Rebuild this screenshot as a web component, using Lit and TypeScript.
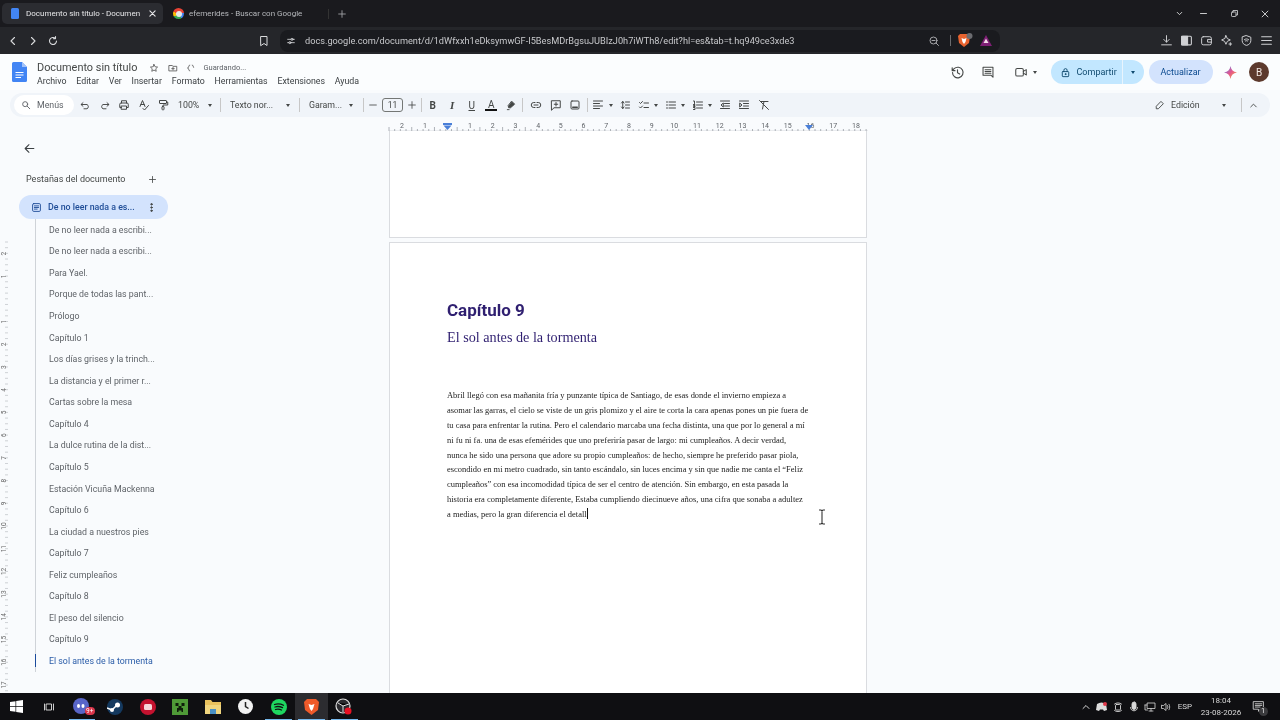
import { LitElement, css, html, svg } from "lit";
import { customElement } from "lit/decorators.js";

const icons: Record<string, unknown> = {
  back: svg`<path d="M15 5l-7 7 7 7"/>`,
  forward: svg`<path d="M9 5l7 7-7 7"/>`,
  reload: svg`<path d="M19 12a7 7 0 1 1-2.2-5.1M17 3v4.2h-4.2"/>`,
  bookmark: svg`<path d="M6 3h12v18l-6-4-6 4z"/>`,
  tune: svg`<path d="M4 8h8M17 8h3M4 16h3M12 16h8"/><circle cx="14.5" cy="8" r="2.5"/><circle cx="9.5" cy="16" r="2.5"/>`,
  zoomout: svg`<circle cx="11" cy="11" r="7"/><path d="M16 16l5 5M8 11h6"/>`,
  download: svg`<path d="M12 3v12M7 10l5 5 5-5M3 20h18"/>`,
  sidepanel: svg`<rect x="3" y="4" width="18" height="16" rx="2"/><rect x="3" y="4" width="11" height="16" fill="currentColor"/>`,
  wallet: svg`<rect x="3" y="5" width="18" height="15" rx="3"/><path d="M21 10h-7v5h7"/>`,
  spark: svg`<path d="M11 3l2.5 5.5L19 11l-5.5 2.5L11 19l-2.5-5.5L3 11l5.5-2.5zM19 16v5M16.5 18.5h5"/>`,
  shield: svg`<path d="M12 3l8 3v6c0 5-3.5 8-8 9-4.5-1-8-4-8-9V6z"/><path d="M8 10.5c2.4-2 5.6-2 8 0M9.8 13c1.3-1 3.1-1 4.4 0"/>`,
  menu: svg`<path d="M3 5h18M3 12h18M3 19h18"/>`,
  star: svg`<path d="M12 3.5l2.6 5.5 6 .8-4.4 4.1 1.1 6L12 17l-5.3 2.9 1.1-6-4.4-4.1 6-.8z"/>`,
  folder: svg`<path d="M3 6h7l2 2h9v11H3z"/><path d="M12 10.5v6M9 13.5h6"/>`,
  cloud: svg`<path d="M9 5c-3 0-2 4-3 5.5-.5.8-1.5 1.5-2.5 1.5 1 0 2 .7 2.5 1.5C7 15 6 19 9 19M15 5c3 0 2 4 3 5.5"/>`,
  history: svg`<path d="M4 12a8.5 8.5 0 1 0 2.6-6.1L3.5 9M3.5 4.500V9H8M12 7.500V12.500l3.500 2"/>`,
  comment: svg`<path d="M3.500 4h17v17l-3.500-3.500H3.500zM7 8h10M7 11h10M7 14h10"/>`,
  video: svg`<rect x="3" y="6" width="13" height="13" rx="2.500"/><path d="M16 11l5-3v9l-5-3"/>`,
  lock: svg`<rect x="5" y="10" width="14" height="11" rx="1.500"/><path d="M8.500 10V7a3.500 3.500 0 0 1 7 0v3"/><circle cx="12" cy="15.500" r="1" fill="currentColor"/>`,
  search: svg`<circle cx="10" cy="10" r="6"/><path d="M15 15l6 6"/>`,
  undo: svg`<path d="M7 6L3 10l4 4M3.500 10H15a5.500 5.500 0 0 1 0 9.500H9" transform="matrix(1 0 0 .9 1 2)"/>`,
  redo: svg`<path d="M17 6l4 4-4 4M20.500 10H9a5.500 5.500 0 0 0 0 9.500h6" transform="matrix(1 0 0 .9 -1 2)"/>`,
  print: svg`<path d="M7 8V3.500h10V8M7 17H3.500v-6.500a2.500 2.500 0 0 1 2.500-2.500h12a2.500 2.500 0 0 1 2.500 2.500V17H17"/><rect x="7" y="14" width="10" height="6.500"/>`,
  spell: svg`<path d="M4 15L9 3l5 12M5.800 11h6.400M10 19l3 3 8-9"/>`,
  paint: svg`<rect x="5" y="3" width="14" height="6" rx="1"/><path d="M19 6h2.500v6H12v3"/><rect x="10" y="15" width="4" height="6.500" rx="1"/>`,
  pen: svg`<path d="M15 3l6 6-9 8H8l-1-4z" fill="currentColor"/><path d="M5 21h4"/>`,
  link: svg`<path d="M10 7H7.500a5 5 0 0 0 0 10H10M14 7h2.500a5 5 0 0 1 0 10H14M8 12h8"/>`,
  addcomment: svg`<path d="M3.500 3.500h17v14H8l-4.500 4.500zM12 7v7M8.500 10.500h7"/>`,
  image: svg`<rect x="4" y="4" width="16" height="16" rx="2"/><path d="M7.500 16.500h9" stroke-width="3"/>`,
  align: svg`<path d="M3 4h18M3 9h12M3 14h18M3 19h12"/>`,
  spacing: svg`<path d="M5 8l2.500-3L10 8M5 16l2.500 3 2.500-3M7.500 5v14M13 6h8M13 12h8M13 18h8"/>`,
  check: svg`<path d="M3 7l2 2 4-4M3 16l2 2 4-4M12 8h9M12 17h9"/>`,
  bullets: svg`<path d="M8 6h13M8 12h13M8 18h13M3 6h2M3 12h2M3 18h2"/>`,
  numbers: svg`<path d="M9 6h12M9 12h12M9 18h12M3 4h2v5M3 11h3v2H3v2h3M3 17h3v4H3"/>`,
  outdent: svg`<path d="M3 4h18M11 9h10M11 14h10M3 19h18M8 8.500l-4 3.500 4 3.500z"/>`,
  indent: svg`<path d="M3 4h18M11 9h10M11 14h10M3 19h18M4 8.500l4 3.500-4 3.500z"/>`,
  clear: svg`<path d="M5 5h15M12 5l-3 15M3 3l18 18"/>`,
  pencil: svg`<path d="M15 4l5 5L8 21H3v-5z"/>`,
  chevup: svg`<path d="M6 15l6-6 6 6"/>`,
  arrowleft: svg`<path d="M20 12H4M11 5l-7 7 7 7"/>`,
  plus: svg`<path d="M12 4v16M4 12h16"/>`,
  minus: svg`<path d="M4 12h16"/>`,
  tabdoc: svg`<rect x="3.500" y="3.500" width="17" height="17" rx="2.500"/><path d="M7.500 8.500h9M7.500 12h9M7.500 15.500h6"/>`,
  dots: svg`<circle cx="12" cy="5" r="1.600" fill="currentColor"/><circle cx="12" cy="12" r="1.600" fill="currentColor"/><circle cx="12" cy="19" r="1.600" fill="currentColor"/>`,
  close: svg`<path d="M5 5l14 14M19 5L5 19"/>`,
  chevdown: svg`<path d="M6 9l6 6 6-6"/>`,
  restore: svg`<rect x="4" y="8" width="12" height="12" rx="2"/><path d="M8 8V4h12v12h-4"/>`,
  taskview: svg`<rect x="7" y="6" width="10" height="12"/><path d="M3 6v12M21 6v12"/>`,
  mic: svg`<rect x="8" y="2" width="8" height="15" rx="4" fill="currentColor"/><path d="M5 13c0 9 14 9 14 0"/>`,
  net: svg`<rect x="7" y="4" width="15" height="11"/><path d="M2 8h4M2 8v10h5M14 15v5M10 20h8"/>`,
  volume: svg`<path d="M3 9v6h4l5 4V5L7 9zM15 9c1 2 1 4 0 6M18 6.500c2 3.500 2 7.500 0 11"/>`,
  meet: svg`<rect x="7" y="7" width="10" height="11" rx="2"/><path d="M5 6c3-3 11-3 14 0M5 19c3 3 11 3 14 0"/>`,
  notif: svg`<path d="M3 3h18v14h-6l-3 4v-4H3zM6 7h12M6 10h12M6 13h9"/>`,
};

function ic(name: string, size = 14, sw = 2) {
  return html`<svg class="ic" width=${size} height=${size} viewBox="0 0 24 24" stroke-width=${sw}>${icons[name]}</svg>`;
}

// fixed-width spacer between toolbar items
const sp = (w: number) => html`<span class="sp" style="width:${w}px"></span>`;

const menus = ["Archivo", "Editar", "Ver", "Insertar", "Formato", "Herramientas", "Extensiones", "Ayuda"];

const outline = [
  "De no leer nada a escribi...",
  "De no leer nada a escribi...",
  "Para Yael.",
  "Porque de todas las pant...",
  "Prólogo",
  "Capítulo 1",
  "Los días grises y la trinch...",
  "La distancia y el primer r...",
  "Cartas sobre la mesa",
  "Capítulo 4",
  "La dulce rutina de la dist...",
  "Capítulo 5",
  "Estación Vicuña Mackenna",
  "Capítulo 6",
  "La ciudad a nuestros pies",
  "Capítulo 7",
  "Feliz cumpleaños",
  "Capítulo 8",
  "El peso del silencio",
  "Capítulo 9",
  "El sol antes de la tormenta",
];

const body = [
  "Abril llegó con esa mañanita fría y punzante típica de Santiago, de esas donde el invierno empieza a",
  "asomar las garras, el cielo se viste de un gris plomizo y el aire te corta la cara apenas pones un pie fuera de",
  "tu casa para enfrentar la rutina. Pero el calendario marcaba una fecha distinta, una que por lo general a mí",
  "ni fu ni fa. una de esas efemérides que uno preferiría pasar de largo: mi cumpleaños. A decir verdad,",
  "nunca he sido una persona que adore su propio cumpleaños: de hecho, siempre he preferido pasar piola,",
  "escondido en mi metro cuadrado, sin tanto escándalo, sin luces encima y sin que nadie me canta el “Feliz",
  "cumpleaños” con esa incomodidad típica de ser el centro de atención. Sin embargo, en esta pasada la",
  "historia era completamente diferente, Estaba cumpliendo diecinueve años, una cifra que sonaba a adultez",
];

@customElement("app-root")
export class AppRoot extends LitElement {
  static styles = css`
    :host {
      display: block;
      width: 1280px;
      height: 720px;
      overflow: hidden;
      font-family: Roboto, "Liberation Sans", sans-serif;
      background: #f9fbfd;
      color: #444746;
      position: relative;
      filter: blur(0.3px);
    }
    .ic { fill: none; stroke: currentColor; stroke-linecap: round; stroke-linejoin: round; display: block; flex: none; }
    .sp { display: block; flex: none; }

    /* browser chrome */
    .tabs { height: 27px; background: #1a1a1e; display: flex; align-items: center; color: #d6d7da; font-size: 8px; }
    .tab { height: 21px; display: flex; align-items: center; border-radius: 5px; white-space: nowrap; }
    .tab.on { width: 161px; margin-left: 2px; background: #2b2c31; padding: 0 6px 0 9px; box-sizing: border-box; color: #e6e6e8; }
    .tab.on .ttl { width: 116px; margin-left: 7px; overflow: hidden; flex: none; }
    .tab.on .ic { margin-left: auto; }
    .tab.off { margin-left: 10px; width: 147px; color: #b6b8bc; padding-left: 0; }
    .tab.off .ttl { margin-left: 5px; }
    .fav { width: 8px; height: 11px; background: #4285f4; border-radius: 1.500px; flex: none; }
    .g { width: 11px; height: 11px; border-radius: 50%; flex: none; background: conic-gradient(#ea4335 0 25%, #4285f4 25% 40%, #34a853 40% 65%, #fbbc05 65% 80%, #ea4335 80%); position: relative; }
    .g::after { content: ""; position: absolute; inset: 2.500px; background: #e8e8e8; border-radius: 50%; }
    .newtab { color: #a8aaae; margin-left: 8px; padding-left: 8px; border-left: 1px solid #333; }
    .winctl { margin-left: auto; display: flex; align-items: center; color: #d5d6d8; padding-right: 10px; }

    .addr { height: 27px; background: #25262a; display: flex; align-items: center; color: #d9dadc; box-sizing: border-box; }
    .addr .nav { display: flex; gap: 8px; margin-left: 7px; width: 251px; flex: none; }
    .bm { width: 22px; flex: none; }
    .omni { width: 720px; height: 22px; background: #1a1b1f; border-radius: 8px; display: flex; align-items: center; padding: 0 8px 0 6px; box-sizing: border-box; flex: none; }
    .url { margin-left: 9px; font-size: 9.200px; color: #c7c8cb; white-space: nowrap; }
    .omni .zm { margin-left: auto; color: #b5b6b9; }
    .bar { width: 1px; height: 11px; background: #6a6b6e; margin: 0 7px 0 10px; }
    .ext { margin-left: auto; display: flex; gap: 7px; margin-right: 7px; align-items: center; }
    .ext svg { color: #d0d1d4; }

    /* docs header */
    .head { height: 36px; display: flex; align-items: center; background: #fbfdfe; position: relative; }
    .logo { margin-left: 12px; width: 15px; height: 20px; flex: none; }
    .titles { margin-left: 10px; display: flex; flex-direction: column; align-self: flex-start; padding-top: 7px; }
    .titlerow { display: flex; align-items: center; height: 13px; color: #555; }
    .title { font-size: 10.900px; color: #444746; }
    .star { margin-left: 12px; }
    .folder { margin-left: 9px; }
    .cloud { margin-left: 8px; }
    .saving { font-size: 7.500px; color: #5f6368; margin-left: 7px; }
    .menus { display: flex; gap: 9.800px; font-size: 8.800px; color: #3c4043; height: 13px; align-items: center; }
    .actions { margin-left: auto; display: flex; align-items: center; color: #444746; }
    .share { margin-left: 14px; height: 24px; width: 93px; background: #c2e7ff; border-radius: 12px; display: flex; align-items: center; color: #0f4a6f; font-size: 9px; }
    .share .l { width: 72px; height: 100%; display: flex; align-items: center; gap: 6px; padding-left: 9px; box-sizing: border-box; border-right: 1px solid #e8f4fd; }
    .share .r { flex: 1; display: flex; justify-content: center; }
    .caret { width: 0; height: 0; border-left: 2.500px solid transparent; border-right: 2.500px solid transparent; border-top: 3px solid currentColor; flex: none; display: block; }
    .upgrade { margin-left: 5px; width: 64px; height: 24px; border-radius: 12px; background: #d3e3fd; color: #0b4a8f; font-size: 9px; display: flex; align-items: center; justify-content: center; }
    .gem { margin-left: 11px; flex: none; }
    .avatar { width: 20px; height: 20px; border-radius: 50%; background: #5d3a2d; color: #f3e9e4; font-size: 10px; display: flex; align-items: center; justify-content: center; margin: 0 11px 0 12.500px; }

    /* toolbar */
    .tool { height: 24px; margin: 3px 10px 0; background: #f0f4f9; border-radius: 12px; display: flex; align-items: center; color: #444746; font-size: 8.800px; position: relative; }
    .find { margin-left: 4px; width: 60px; height: 20px; background: #fff; border-radius: 10px; display: flex; align-items: center; gap: 6px; padding-left: 7px; box-sizing: border-box; color: #5f6368; flex: none; }
    .b { width: 19.500px; display: flex; justify-content: center; align-items: center; flex: none; font-size: 10px; color: #444746; }
    .b.s { width: 18px; }
    .sep { width: 1px; height: 14px; background: #c7c7c7; flex: none; display: block; }
    .txt { white-space: nowrap; flex: none; display: block; }
    .size { width: 21px; height: 14px; border: 1px solid #747775; border-radius: 3px; box-sizing: border-box; display: flex; align-items: center; justify-content: center; font-size: 8.500px; flex: none; }
    .serif-i { font-family: "Liberation Serif", serif; font-weight: 700; font-size: 11px; }
    .color { display: flex; flex-direction: column; align-items: center; line-height: 9px; }
    .color i { width: 12px; height: 2px; background: #111; display: block; }
    .right { margin-left: auto; display: flex; align-items: center; }

    .ruler { height: 11px; margin-top: 3px; display: block; }

    /* main */
    .main { height: 562px; display: flex; position: relative; overflow: hidden; }
    .vruler { width: 10px; flex: none; }
    .side { width: 379px; flex: none; position: relative; }
    .backbtn { margin: 11px 0 0 13px; color: #3c4043; }
    .sidehead { margin: 18px 0 0 16px; width: 131px; display: flex; align-items: center; justify-content: space-between; font-size: 9px; color: #444746; height: 12px; }
    .active { margin: 10px 0 0 9px; width: 149px; height: 24px; background: #d3e3fd; border-radius: 12px; display: flex; align-items: center; color: #1f4d97; font-size: 8.800px; font-weight: 500; box-sizing: border-box; padding-left: 12px; }
    .active span { margin-left: 6px; width: 93px; white-space: nowrap; }
    .active .d { color: #444746; margin-left: 5px; }
    .outline { margin: 0 0 0 25px; border-left: 1.500px solid #cfd3d8; position: relative; width: 140px; }
    .row { height: 21.570px; display: flex; align-items: center; padding-left: 13px; font-size: 8.800px; color: #5f6368; white-space: nowrap; }
    .row.cur { color: #2a5ca8; }
    .outline::after { content: ""; position: absolute; left: -1.500px; bottom: 5px; height: 13px; width: 1.500px; background: #1a4a9c; }

    .pages { width: 478px; flex: none; }
    .page { background: #fff; border: 1px solid #dadce0; box-sizing: border-box; }
    .p1 { height: 107px; border-top: 0; }
    .p2 { height: 460px; margin-top: 4px; padding: 57px 0 0 57px; }
    h1 { margin: 0; font-size: 17px; line-height: 20px; font-weight: 700; color: #2f1f70; font-family: Roboto, sans-serif; }
    h2 { margin: 8px 0 0; font-size: 14.200px; line-height: 18px; font-weight: 400; color: #2f1f70; font-family: "Liberation Serif", serif; }
    .text { margin-top: 42px; font-family: "Liberation Serif", serif; font-size: 8.470px; line-height: 14.870px; color: #222; white-space: nowrap; }
    .caretline { display: inline-block; width: 1px; height: 11px; background: #111; vertical-align: -2px; }
    .ibeam { position: absolute; left: 817px; top: 509px; width: 10px; height: 16px; color: #333; }

    /* taskbar */
    .taskbar { height: 27px; background: #0f0f12; display: flex; align-items: center; color: #e4e4e4; }
    .cell { width: 32.800px; height: 27px; display: flex; align-items: center; justify-content: center; flex: none; position: relative; box-sizing: border-box; }
    .cell.run::after { content: ""; position: absolute; left: 3px; right: 3px; bottom: 0; height: 1.500px; background: #76b9ed; }
    .cell.cur { background: #2c2c30; }
    .badge { position: absolute; left: 19px; top: 14px; font-size: 6.500px; line-height: 8px; padding: 0 1.500px; background: #d9364a; color: #fff; border-radius: 4px; }
    .tray { margin-left: auto; display: flex; align-items: center; color: #d8d8d8; }
    .tray > .ic { margin-right: 4px; }
    .disc { margin-right: 4.500px; }
    .lang { font-size: 8px; margin: 0 8px 0 2px; }
    .clock { font-size: 8px; text-align: center; line-height: 11.500px; width: 42px; white-space: nowrap; }
    .notif { position: relative; margin: 0 15.500px 0 9.500px; }
    .notif b { position: absolute; right: -3px; bottom: -3px; width: 9px; height: 9px; border-radius: 50%; background: #3a3a3d; color: #fff; font-size: 6.500px; font-weight: 400; line-height: 9px; text-align: center; }
  `;

  private ruler() {
    const ticks = [];
    for (let x = 389; x <= 868; x += 5.68) {
      const major = Math.abs(((x - 389) / 5.68) % 4) < 0.01;
      ticks.push(svg`<line x1=${x} x2=${x} y1=${major ? 7 : 9} y2="11" stroke="#9aa0a6" stroke-width="0.800"/>`);
    }
    const nums = [
      [402, "2"], [425, "1"],
      ...Array.from({ length: 18 }, (_, i) => [470 + i * 22.7, String(i + 1)]),
    ] as [number, string][];
    return html`<svg class="ruler" width="1280" height="11">
      <line x1="389" x2="868" y1="11" y2="11" stroke="#dadce0"/>
      ${ticks}
      ${nums.map(([x, t]) => svg`<text x=${x} y="7.500" font-size="7" text-anchor="middle" fill="#5f6368" font-family="Roboto">${t}</text>`)}
      <path d="M443 3h9v2h-9zM443.500 5.500h8l-4 4.500z" fill="#4a7fd8"/>
      <path d="M805 5h8l-4 5z" fill="#4a7fd8"/>
    </svg>`;
  }

  // vertical ruler: numbers count out from the top margin of the page, rotated
  private vruler() {
    const ticks = [];
    for (let y = 111; y < 562; y += 5.68) {
      ticks.push(svg`<line x1="5" x2="8" y1=${y} y2=${y} stroke="#c4c8cc" stroke-width="0.800"/>`);
    }
    const zero = 168;
    const nums: [number, number][] = [[2, zero - 45.4], [1, zero - 22.7]];
    for (let n = 1; zero + n * 22.7 < 556; n++) nums.push([n, zero + n * 22.7]);
    return html`<svg class="vruler" width="10" height="562">
      ${ticks}
      ${nums.map(([n, y]) => svg`<text transform="translate(6 ${y}) rotate(-90)" font-size="6.500" text-anchor="middle" fill="#666" font-family="Roboto">${n}</text>`)}
    </svg>`;
  }

  private chrome() {
    return html`
      <div class="tabs">
        <div class="tab on">
          <div class="fav"></div>
          <div class="ttl">Documento sin título - Documen</div>
          ${ic("close", 9, 3)}
        </div>
        <div class="tab off">
          <div class="g"></div>
          <div class="ttl">efemerides - Buscar con Google</div>
        </div>
        <div class="newtab">${ic("plus", 10, 2)}</div>
        <div class="winctl">
          ${ic("chevdown", 9, 2.5)}${sp(15)}${ic("minus", 9, 2.5)}${sp(22)}${ic("restore", 9, 2.2)}${sp(21.5)}${ic("close", 10, 2.2)}
        </div>
      </div>
      <div class="addr">
        <div class="nav">${ic("back", 12, 2.2)} ${ic("forward", 12, 2.2)} ${ic("reload", 12, 2.2)}</div>
        <div class="bm">${ic("bookmark", 12, 2)}</div>
        <div class="omni">
          ${ic("tune", 10, 2)}
          <div class="url">docs.google.com/document/d/1dWfxxh1eDksymwGF-I5BesMDrBgsuJUBIzJ0h7iWTh8/edit?hl=es&amp;tab=t.hq949ce3xde3</div>
          <div class="zm">${ic("zoomout", 12, 1.8)}</div>
          <div class="bar"></div>
          <svg width="15" height="15" viewBox="0 0 15 15">
            <path d="M2 1h8l2 2-1 7-5 4-5-4-1-7z" fill="#e8632f"/>
            <path d="M3.500 5l2.500 1 2.500-1-1 4-1.500 2-1.500-2z" fill="#fff"/>
            <circle cx="11.500" cy="3" r="3" fill="#6b6c70"/>
          </svg>
          ${sp(7)}
          <svg width="12" height="11" viewBox="0 0 12 11">
            <path d="M6 0l6 11H0z" fill="#7d1f74"/>
            <path d="M6 3.500l2.500 4.500h-5z" fill="#f3dbe8"/>
          </svg>
        </div>
        <div class="ext">
          ${ic("download", 13, 1.8)} ${ic("sidepanel", 13, 2)} ${ic("wallet", 13, 1.8)} ${ic("spark", 13, 1.8)}
          ${ic("shield", 13, 1.8)} ${ic("menu", 13, 2)}
        </div>
      </div>
    `;
  }

  private header() {
    return html`
      <div class="head">
        <svg class="logo" viewBox="0 0 15 20">
          <path d="M1.500 0H10l5 5v13.500a1.500 1.500 0 0 1-1.500 1.500h-12A1.500 1.500 0 0 1 0 18.500v-17A1.500 1.500 0 0 1 1.500 0z" fill="#4285f4"/>
          <path d="M10 0l5 5h-5z" fill="#a1c2fa"/>
          <path d="M3.500 10.500h8M3.500 13h8M3.500 15.500h5.500" stroke="#fff" stroke-width="1.200"/>
        </svg>
        <div class="titles">
          <div class="titlerow">
            <span class="title">Documento sin título</span>
            <span class="star">${ic("star", 10, 2)}</span>
            <span class="folder">${ic("folder", 10, 2)}</span>
            <span class="cloud">${ic("cloud", 10, 2)}</span>
            <span class="saving">Guardando...</span>
          </div>
          <div class="menus">${menus.map((m) => html`<span>${m}</span>`)}</div>
        </div>
        <div class="actions">
          ${ic("history", 15, 1.8)}${sp(16)}${ic("comment", 14, 1.8)}${sp(19)}${ic("video", 14, 1.8)}${sp(5)}
          <span class="caret"></span>
          <div class="share">
            <div class="l">${ic("lock", 11, 2)}<span>Compartir</span></div>
            <div class="r"><span class="caret"></span></div>
          </div>
          <div class="upgrade">Actualizar</div>
          <svg class="gem" width="13" height="13" viewBox="0 0 24 24">
            <defs><linearGradient id="gem" x1="0" y1="0" x2="1" y2="1"><stop offset="0" stop-color="#4c8df6"/><stop offset=".5" stop-color="#e5558c"/><stop offset="1" stop-color="#f6b73c"/></linearGradient></defs>
            <path d="M12 0c1 7 5 11 12 12-7 1-11 5-12 12-1-7-5-11-12-12 7-1 11-5 12-12z" fill="url(#gem)"/>
          </svg>
          <div class="avatar">B</div>
        </div>
      </div>
    `;
  }

  private toolbar() {
    const b = (n: string) => html`<div class="b">${ic(n, 12, 2)}</div>`;
    const c = html`<span class="caret"></span>`;
    const sep = html`<span class="sep"></span>`;
    return html`
      <div class="tool">
        <div class="find">${ic("search", 10, 2.2)}<span>Menús</span></div>
        ${sp(1.5)}
        ${b("undo")}${b("redo")}${b("print")}${b("spell")}${b("paint")}
        ${sp(5)}<span class="txt" style="width:24px">100%</span>${sp(6)}${c}
        ${sp(8)}${sep}${sp(9)}
        <span class="txt" style="width:44px">Texto nor...</span>${sp(12)}${c}
        ${sp(9)}${sep}${sp(9)}
        <span class="txt" style="width:33px">Garam...</span>${sp(7)}${c}
        ${sp(10)}${sep}
        <div class="b s">${ic("minus", 10, 2)}</div>
        <div class="size">11</div>
        <div class="b s">${ic("plus", 10, 2)}</div>
        ${sep}${sp(1)}
        <div class="b"><b>B</b></div>
        <div class="b"><i class="serif-i">I</i></div>
        <div class="b"><u>U</u></div>
        <div class="b"><span class="color">A<i></i></span></div>
        <div class="b">${ic("pen", 11, 2)}</div>
        ${sp(1)}${sep}${sp(4)}
        ${b("link")}${b("addcomment")}${b("image")}
        ${sp(2)}${sep}${sp(0.5)}
        ${b("align")}${sp(1)}${c}${sp(2)}
        ${b("spacing")}${b("check")}${c}${sp(3.5)}
        ${b("bullets")}${c}${sp(3.5)}
        ${b("numbers")}${c}${sp(3)}
        ${b("outdent")}${b("indent")}${b("clear")}
        <div class="right">
          ${ic("pencil", 10, 2.2)}${sp(6)}
          <span class="txt" style="width:34px">Edición</span>${sp(17)}${c}
          ${sp(15)}${sep}${sp(6)}
          ${ic("chevup", 11, 2)}${sp(11)}
        </div>
      </div>
      ${this.ruler()}
    `;
  }

  private sidebar() {
    return html`
      <div class="side">
        <div class="backbtn">${ic("arrowleft", 13, 2)}</div>
        <div class="sidehead"><span>Pestañas del documento</span>${ic("plus", 9, 2.2)}</div>
        <div class="active">
          ${ic("tabdoc", 11, 2)}<span>De no leer nada a es...</span>
          <div class="d">${ic("dots", 11, 2)}</div>
        </div>
        <div class="outline">
          ${outline.map((t, i) => html`<div class="row ${i === outline.length - 1 ? "cur" : ""}">${t}</div>`)}
        </div>
      </div>
    `;
  }

  private taskbar() {
    return html`
      <div class="taskbar">
        <div class="cell">
          <svg width="13" height="13" viewBox="0 0 13 13" fill="#fff"><path d="M0 2l5.500-.8V6H0zM6.200 1.100L13 0v6H6.200zM0 6.800h5.500v4.900L0 11zM6.200 6.800H13V13l-6.800-1z"/></svg>
        </div>
        <div class="cell">${ic("taskview", 12, 1.8)}</div>
        <div class="cell run">
          <svg width="17" height="17" viewBox="0 0 17 17"><circle cx="8" cy="8" r="8" fill="#5865c8"/><ellipse cx="5.500" cy="8" rx="1.500" ry="2" fill="#fff"/><ellipse cx="10" cy="8" rx="1.500" ry="2" fill="#fff"/></svg>
          <span class="badge">9+</span>
        </div>
        <div class="cell">
          <svg width="16" height="16" viewBox="0 0 16 16"><circle cx="8" cy="8" r="8" fill="#14395f"/><path d="M0 9l5 2 5-5" stroke="#fff" stroke-width="1.500" fill="none"/><circle cx="10.500" cy="6" r="2.500" fill="#fff"/><circle cx="5" cy="11" r="2" fill="#fff"/></svg>
        </div>
        <div class="cell">
          <svg width="16" height="16" viewBox="0 0 16 16"><circle cx="8" cy="8" r="8" fill="#c3122f"/><rect x="4" y="5" width="8" height="6" rx="1.500" fill="#f6d5d9"/></svg>
        </div>
        <div class="cell">
          <svg width="16" height="16" viewBox="0 0 16 16"><rect width="16" height="16" fill="#4f9a37"/><path d="M3.500 4h3v3h-3zM9.500 4h3v3h-3zM6.500 7h3v2h1.500v4H9.500v-1.500h-3V13H5V9h1.500z" fill="#0e1d0a"/></svg>
        </div>
        <div class="cell">
          <svg width="16" height="15" viewBox="0 0 16 15"><path d="M0 1h6l1.500 2H16v12H0z" fill="#e8c15d"/><rect x="0" y="6" width="16" height="9" fill="#f0d57e"/><rect x="5" y="10" width="6" height="5" fill="#4a90c4"/></svg>
        </div>
        <div class="cell">
          <svg width="15" height="15" viewBox="0 0 15 15"><circle cx="7.500" cy="7.500" r="7.500" fill="#f2f2f2"/><path d="M7.500 3v4.500l3 2" stroke="#222" stroke-width="1.500" fill="none"/></svg>
        </div>
        <div class="cell run">
          <svg width="16" height="16" viewBox="0 0 16 16"><circle cx="8" cy="8" r="8" fill="#1ed760"/><path d="M3.500 5.500c3-1 6-.8 9 .8M4 8c2.500-.8 5-.6 7.500.6M4.500 10.500c2-.6 4-.5 6 .5" stroke="#111" stroke-width="1.300" fill="none" stroke-linecap="round"/></svg>
        </div>
        <div class="cell run cur">
          <svg width="15" height="16" viewBox="0 0 15 16"><path d="M3 0h9l3 3-1 8-6.500 5L1 11 0 3z" fill="#ef5a2a"/><path d="M4.500 5l3 1 3-1-1.500 5-1.500 2-1.500-2z" fill="#fff"/></svg>
        </div>
        <div class="cell run">
          <svg width="18" height="18" viewBox="0 0 18 18"><circle cx="8" cy="8" r="7" fill="#2a2a2e" stroke="#ddd" stroke-width="1.200"/><path d="M3 5l5 3 6-2M8 8v6" stroke="#ddd" stroke-width="1"/><circle cx="13" cy="13" r="3.500" fill="#e81123"/></svg>
        </div>
        <div class="tray">
          ${ic("chevup", 12, 2)}
          <svg class="disc" width="11" height="10" viewBox="0 0 11 10"><path d="M1 2c3-2 6-2 9 0l1 6-3 1-1-1.500H4L3 9 0 8z" fill="#ddd"/><circle cx="9" cy="2" r="2" fill="#e0394b"/></svg>
          ${ic("meet", 12, 1.8)} ${ic("mic", 12, 1.8)} ${ic("net", 12, 1.6)} ${ic("volume", 12, 1.6)}
          <span class="lang">ESP</span>
          <div class="clock"><div>18:04</div><div>23-08-2026</div></div>
          <div class="notif">${ic("notif", 13, 1.6)}<b>1</b></div>
        </div>
      </div>
    `;
  }

  render() {
    return html`
      ${this.chrome()} ${this.header()} ${this.toolbar()}
      <div class="main">
        ${this.vruler()} ${this.sidebar()}
        <div class="pages">
          <div class="page p1"></div>
          <div class="page p2">
            <h1>Capítulo 9</h1>
            <h2>El sol antes de la tormenta</h2>
            <div class="text">
              ${body.map((l) => html`<div>${l}</div>`)}
              <div>a medias, pero la gran diferencia el detall<span class="caretline"></span></div>
            </div>
          </div>
        </div>
      </div>
      <svg class="ibeam" viewBox="0 0 10 16"><path d="M2 1h2l1 1 1-1h2M2 15h2l1-1 1 1h2M5 2v12" fill="none" stroke="currentColor" stroke-width="1.100"/></svg>
      ${this.taskbar()}
    `;
  }
}
